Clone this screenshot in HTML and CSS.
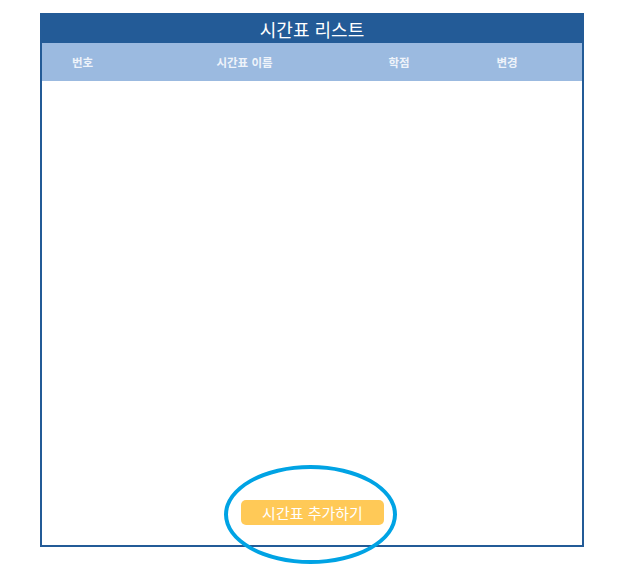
FILE: index.html
```html
<!DOCTYPE html>
<html lang="ko">
<head>
<meta charset="utf-8">
<link rel="stylesheet" href="styles.css">
</head>
<body>
<div class="page">
  <div class="panel">
    <div class="title">시간표 리스트</div>
    <div class="thead">
      <div class="th c1">번호</div>
      <div class="th c2">시간표 이름</div>
      <div class="th c3">학점</div>
      <div class="th c4">변경</div>
    </div>
    <div class="tbody">
      <button class="add-btn">시간표 추가하기</button>
    </div>
  </div>
  <div class="highlight"></div>
</div>
</body>
</html>
```
FILE: styles.css
```css
html, body {
  margin: 0;
  padding: 0;
  background: #ffffff;
  font-family: "Noto Sans CJK KR", "Noto Sans", sans-serif;
}
.page {
  position: relative;
  padding: 13px 0 0 40px;
  width: 633px;
  height: 571px;
  box-sizing: border-box;
}
.panel {
  width: 544px;
  height: 534px;
  box-sizing: border-box;
  border: 2px solid #235b97;
  display: flex;
  flex-direction: column;
}
.title {
  height: 28px;
  background: #235b97;
  color: #ffffff;
  font-size: 18px;
  line-height: 28px;
  text-align: center;
}
.thead {
  height: 38px;
  background: #9bbae0;
  display: flex;
  align-items: center;
}
.th {
  color: #eef3fa;
  font-size: 11.5px;
  font-weight: bold;
  text-align: center;
}
.c1 { width: 81px; }
.c2 { width: 243px; }
.c3 { width: 66px; }
.c4 { width: 150px; }
.tbody {
  flex: 1;
  display: flex;
  flex-direction: column;
  justify-content: flex-end;
  align-items: center;
  padding-bottom: 20px;
}
.add-btn {
  width: 143px;
  height: 25px;
  margin-left: 1px;
  border: none;
  border-radius: 5px;
  background: #ffc957;
  color: #ffffff;
  font-family: "Noto Sans CJK KR", "Noto Sans", sans-serif;
  font-size: 15px;
  line-height: 25px;
  padding: 0;
}
.highlight {
  position: absolute;
  left: 224px;
  top: 465px;
  width: 173px;
  height: 99px;
  box-sizing: border-box;
  border: 4px solid #00a3e4;
  border-radius: 50%;
  pointer-events: none;
}
```
